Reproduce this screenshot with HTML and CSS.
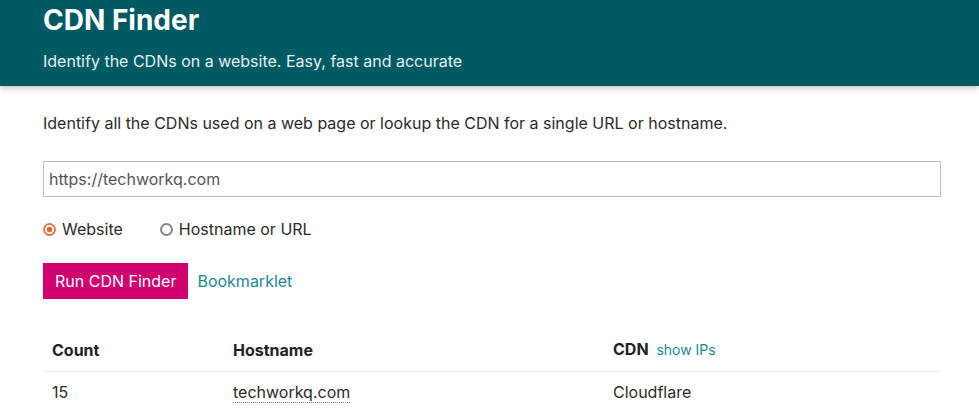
FILE: index.html
```html
<!DOCTYPE html>
<html lang="en">
<head>
<meta charset="utf-8">
<title>CDN Finder</title>
<link rel="stylesheet" href="styles.css">
</head>
<body>
<header class="hero">
  <div class="wrap">
    <h1 class="title">CDN Finder</h1>
    <p class="tagline">Identify the CDNs on a website. Easy, fast and accurate</p>
  </div>
</header>
<main class="wrap main">
  <p class="intro">Identify all the CDNs used on a web page or lookup the CDN for a single URL or hostname.</p>
  <input class="url" type="text" value="https://techworkq.com">
  <div class="modes">
    <label class="mode"><span class="dot on"></span>Website</label>
    <label class="mode"><span class="dot"></span>Hostname or URL</label>
  </div>
  <div class="actions">
    <button class="run">Run CDN Finder</button>
    <a class="link" href="#">Bookmarklet</a>
  </div>
  <table class="results">
    <thead>
      <tr>
        <th class="c1">Count</th>
        <th class="c2">Hostname</th>
        <th class="c3">CDN <a class="small link" href="#">show IPs</a></th>
      </tr>
    </thead>
    <tbody>
      <tr>
        <td>15</td>
        <td><span class="host">techworkq.com</span></td>
        <td>Cloudflare</td>
      </tr>
    </tbody>
  </table>
</main>
</body>
</html>
```
FILE: styles.css
```css
html, body {
  margin: 0;
  padding: 0;
  background: #fff;
}
body {
  font-family: Inter, "Noto Sans", sans-serif;
  font-size: 16px;
  line-height: 24px;
  color: #2b2b2b;
}
.wrap {
  padding-left: 43px;
  width: 898px;
}
.hero {
  background: #005a63;
  color: #fff;
  height: 86px;
  box-sizing: border-box;
  padding-top: 3px;
  box-shadow: 0 2px 6px rgba(0,0,0,0.25);
}
.title {
  margin: 0;
  font-size: 28px;
  line-height: 34px;
  font-weight: 700;
}
.tagline {
  margin: 12px 0 0;
  color: #e4f1f2;
}
.main {
  padding-top: 25px;
}
.intro {
  margin: 0 0 26px;
}
.url {
  display: block;
  box-sizing: border-box;
  width: 898px;
  height: 36px;
  margin: 0;
  padding: 0 5px;
  border: 1px solid #bdbdbd;
  border-radius: 0;
  font-family: inherit;
  font-size: 16px;
  color: #555;
  outline: none;
}
.modes {
  display: flex;
  gap: 37px;
  margin-top: 20px;
}
.mode {
  display: flex;
  align-items: center;
  gap: 6px;
}
.dot {
  box-sizing: border-box;
  width: 13px;
  height: 13px;
  border-radius: 50%;
  border: 2px solid #858585;
  background: #fff;
}
.dot.on {
  border-color: #e4774c;
  background: radial-gradient(circle, #df6a3f 0 2.6px, #fff 3.2px);
}
.actions {
  display: flex;
  align-items: center;
  gap: 9px;
  margin-top: 22px;
}
.run {
  height: 36px;
  padding: 0 12px;
  border: 0;
  background: #d1006f;
  color: #fff;
  font-family: inherit;
  font-size: 16px;
}
.link {
  color: #1e8891;
  text-decoration: none;
}
.small {
  font-size: 14px;
  margin-left: 4px;
  font-weight: 400;
}
.results {
  margin-top: 29px;
  width: 898px;
  border-collapse: collapse;
}
.results th, .results td {
  text-align: left;
  padding: 9px 9px;
  line-height: 24px;
}
.results td {
  padding-top: 8px;
}
.results th {
  font-weight: 700;
  color: #222;
  border-bottom: 1px solid #ececec;
}
.c1 { width: 163px; }
.c2 { width: 362px; }
.host {
  border-bottom: 1px dotted #777;
}
```
